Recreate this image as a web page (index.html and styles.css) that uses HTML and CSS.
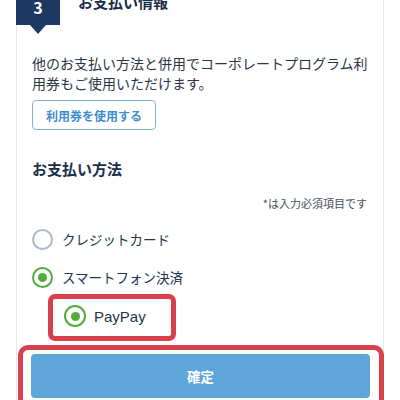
FILE: index.html
```html
<!DOCTYPE html>
<html lang="ja">
<head>
    <meta charset="UTF-8">
    <meta name="viewport" content="width=device-width, initial-scale=1.0">
    <title>お支払い情報</title>
    <link rel="stylesheet" href="styles.css">
</head>
<body>

    <div class="card">
        <div class="step-head">
            <div class="step-num">3</div>
            <h2 class="step-title">お支払い情報</h2>
        </div>

        <div class="card-body">
            <p class="lead">他のお支払い方法と併用でコーポレートプログラム利用券もご使用いただけます。</p>
            <button class="coupon-btn">利用券を使用する</button>

            <h3 class="section-title">お支払い方法</h3>
            <p class="required-note">*は入力必須項目です</p>

            <div class="radio-row">
                <span class="radio"></span>
                <span class="radio-label">クレジットカード</span>
            </div>
            <div class="radio-row">
                <span class="radio checked"></span>
                <span class="radio-label">スマートフォン決済</span>
            </div>

            <div class="mark sub-mark">
                <div class="radio-row">
                    <span class="radio checked"></span>
                    <span class="radio-label paypay">PayPay</span>
                </div>
            </div>

            <div class="mark submit-mark">
                <button class="submit-btn">確定</button>
            </div>
        </div>
    </div>

</body>
</html>
```

FILE: styles.css
```css
body {
    margin: 0;
    font-family: "Noto Sans CJK JP", "Liberation Sans", sans-serif;
    color: #2a3548;
    background: #fff;
}

.card {
    margin: -20px 16px 0;
    border: 1px solid #e8e8e8;
    height: 460px;
}

.step-head {
    display: flex;
    align-items: flex-start;
}

.step-num {
    position: relative;
    width: 44px;
    height: 28px;
    margin-left: -1px;
    padding-top: 16px;
    background: #1d3862;
    color: #fff;
    font-size: 16px;
    font-weight: bold;
    line-height: 20px;
    text-align: center;
}

.step-num::after {
    content: "";
    position: absolute;
    left: 14px;
    top: 100%;
    border-top: 9px solid #1d3862;
    border-left: 8px solid transparent;
    border-right: 8px solid transparent;
}

.step-title {
    margin: 11px 0 0 18px;
    font-size: 15px;
    line-height: 20px;
    color: #1b2d4a;
}

.card-body {
    padding: 0 16px 0 15px;
}

.lead {
    margin: 28px -4px 0 0;
    font-size: 14px;
    line-height: 20px;
}

.coupon-btn {
    display: block;
    margin-top: 7px;
    width: 124px;
    height: 30px;
    padding: 0;
    background: #fff;
    border: 1px solid #7db2d9;
    border-radius: 4px;
    color: #3d8fcc;
    font-family: inherit;
    font-size: 12px;
    font-weight: bold;
}

.section-title {
    margin: 29px 0 0;
    font-size: 15px;
    line-height: 20px;
    color: #1b2d4a;
}

.required-note {
    margin: 16px 0 0;
    font-size: 11px;
    line-height: 16px;
    text-align: right;
    color: #4a5160;
}

.radio-row {
    display: flex;
    align-items: center;
    height: 24px;
    margin-top: 16px;
}

.radio-row + .radio-row {
    margin-top: 14px;
}

.radio {
    box-sizing: border-box;
    width: 21px;
    height: 21px;
    border: 2px solid #a9bacb;
    border-radius: 50%;
    display: flex;
    align-items: center;
    justify-content: center;
}

.radio.checked {
    border-color: #55aa3e;
}

.radio.checked::before {
    content: "";
    width: 9px;
    height: 9px;
    border-radius: 50%;
    background: #55aa3e;
}

.radio-label {
    margin-left: 9px;
    font-size: 13.5px;
    color: #23344f;
}

.mark {
    border: 5px solid #d8414b;
    border-radius: 7px;
}

.sub-mark {
    box-sizing: border-box;
    width: 128px;
    margin: 5px 0 0 16px;
    padding: 5px 0 8px 11px;
}

.sub-mark .radio-row {
    margin-top: 0;
}

.sub-mark .radio {
    width: 22px;
    height: 22px;
}

.paypay {
    font-family: "Liberation Sans", sans-serif;
    font-size: 15px;
    margin-left: 8px;
}

.submit-mark {
    margin: 4px -17px 0 -14px;
    padding: 4px 9px 10px 8px;
    border-radius: 10px;
}

.submit-btn {
    display: block;
    width: 100%;
    height: 44px;
    background: #5ea6da;
    border: none;
    border-radius: 4px;
    color: #fff;
    font-family: inherit;
    font-size: 13.5px;
    font-weight: bold;
}
```
